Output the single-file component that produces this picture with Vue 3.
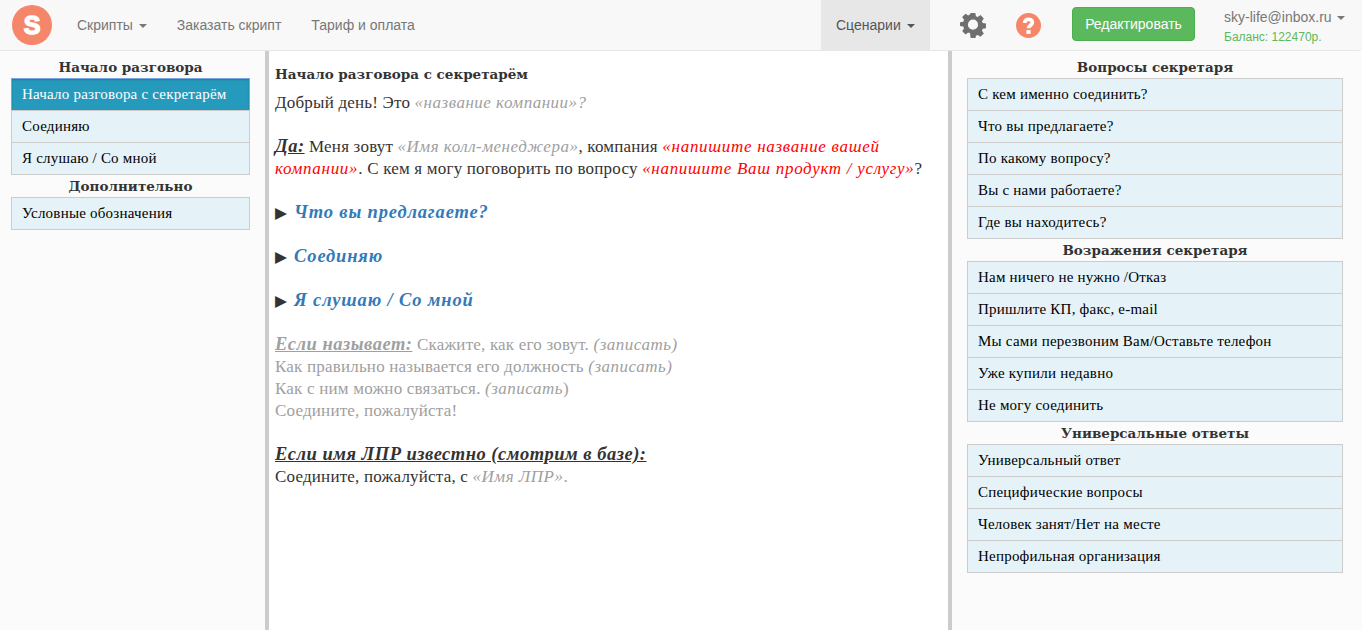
<script setup>
const left = [
  { title: 'Начало разговора', items: ['Начало разговора с секретарём', 'Соединяю', 'Я слушаю / Со мной'], active: 0 },
  { title: 'Дополнительно', items: ['Условные обозначения'], active: -1 }
]
const right = [
  { title: 'Вопросы секретаря', items: ['С кем именно соединить?', 'Что вы предлагаете?', 'По какому вопросу?', 'Вы с нами работаете?', 'Где вы находитесь?'] },
  { title: 'Возражения секретаря', items: ['Нам ничего не нужно /Отказ', 'Пришлите КП, факс, e-mail', 'Мы сами перезвоним Вам/Оставьте телефон', 'Уже купили недавно', 'Не могу соединить'] },
  { title: 'Универсальные ответы', items: ['Универсальный ответ', 'Специфические вопросы', 'Человек занят/Нет на месте', 'Непрофильная организация'] }
]
</script>

<template>
  <div class="page">
    <header class="nav">
      <div class="logo">S</div>
      <a class="link first">Скрипты <i class="caret"></i></a>
      <a class="link">Заказать скрипт</a>
      <a class="link">Тариф и оплата</a>
      <div class="spacer"></div>
      <a class="link scen">Сценарии <i class="caret"></i></a>
      <svg class="gear" viewBox="0 0 24 24" width="26" height="26">
        <path fill="#6f6f6f" fill-rule="evenodd" d="M9.6 0h4.8l.6 3.3 1.9.8 2.8-1.9 3.4 3.4-1.9 2.8.8 1.9 3.3.6v4.8l-3.3.6-.8 1.9 1.9 2.8-3.4 3.4-2.8-1.9-1.9.8-.6 3.3H9.6L9 20.9l-1.9-.8-2.8 1.9-3.4-3.4 1.9-2.8-.8-1.9-3.3-.6V9.5l3.3-.6.8-1.9-1.9-2.8 3.4-3.4 2.8 1.9L9 1.3zM12 6.8a5.2 5.2 0 1 0 0 10.4 5.2 5.2 0 0 0 0-10.4z" transform="translate(1.2 .9) scale(.9)"/>
      </svg>
      <svg class="help" viewBox="0 0 24 24" width="25" height="25">
        <circle cx="12" cy="12" r="12" fill="#f5866a"/>
        <path fill="none" stroke="#fff" stroke-width="3.6" d="M8.4 9.6c0-2.4 1.6-3.6 3.6-3.6s3.7 1.1 3.7 3c0 2.8-3.6 2.6-3.6 5.6"/>
        <rect x="10" y="16.4" width="4" height="3.6" fill="#fff"/>
      </svg>
      <button class="edit">Редактировать</button>
      <div class="user">
        <div class="mail">sky-life@inbox.ru <i class="caret"></i></div>
        <div class="bal">Баланс: 122470р.</div>
      </div>
    </header>

    <div class="cols">
      <aside class="side lside">
        <section v-for="g in left" :key="g.title">
          <h4>{{ g.title }}</h4>
          <ul>
            <li v-for="(it, i) in g.items" :key="it" :class="{ active: i === g.active }">{{ it }}</li>
          </ul>
        </section>
      </aside>

      <main class="main">
        <h4 class="head">Начало разговора с секретарём</h4>
        <p>Добрый день! Это <em class="gr">«название компании»?</em></p>
        <p class="sp"><b class="lab">Да:</b> Меня зовут <em class="gr">«Имя колл-менеджера»</em>, компания <em class="red">«напишите название вашей компании»</em>. С кем я могу поговорить по вопросу <em class="red">«напишите Ваш продукт / услугу»</em>?</p>
        <p class="jump sp"><span class="tri">▶</span><a>Что вы предлагаете?</a></p>
        <p class="jump sp"><span class="tri">▶</span><a>Соединяю</a></p>
        <p class="jump sp"><span class="tri">▶</span><a>Я слушаю / Со мной</a></p>
        <div class="muted sp">
          <p><b class="lab">Если называет:</b> Скажите, как его зовут. <em>(записать)</em></p>
          <p>Как правильно называется его должность <em>(записать)</em></p>
          <p>Как с ним можно связаться. <em>(записать</em>)</p>
          <p>Соедините, пожалуйста!</p>
        </div>
        <p class="sp"><b class="lab">Если имя ЛПР известно (смотрим в базе):</b></p>
        <p>Соедините, пожалуйста, с <em class="gr">«Имя ЛПР»</em><span class="gr">.</span></p>
      </main>

      <aside class="side rside">
        <section v-for="g in right" :key="g.title">
          <h4>{{ g.title }}</h4>
          <ul>
            <li v-for="it in g.items" :key="it">{{ it }}</li>
          </ul>
        </section>
      </aside>
    </div>
  </div>
</template>

<style>
html, body { margin: 0; padding: 0; overflow: hidden; }
</style>

<style scoped>
.page { height: 630px; display: flex; flex-direction: column; font-family: "Liberation Serif", serif; color: #333; background: #fff; }
.nav { height: 50px; flex: none; box-sizing: content-box; display: flex; align-items: center; background: #f8f8f8; border-bottom: 1px solid #e7e7e7; border-bottom-right-radius: 4px; font-family: "Liberation Sans", sans-serif; font-size: 14px; color: #777; }
.logo { width: 40px; height: 40px; margin-left: 12px; border-radius: 50%; background: #f5866a; color: #fff; font: 700 25px/41px "Liberation Sans", sans-serif; -webkit-text-stroke: 1.5px #fff; text-align: center; flex: none; }
.link { height: 50px; line-height: 50px; padding: 0 15px; color: #777; }
.first { margin-left: 10px; }
.caret { display: inline-block; margin-left: 2px; vertical-align: middle; border-top: 4px solid; border-left: 4px solid transparent; border-right: 4px solid transparent; }
.spacer { flex: 1; }
.scen { background: #e7e7e7; color: #555; width: 79px; }
.gear { margin-left: 30px; }
.help { margin-left: 30px; }
.edit { margin-left: 31px; margin-bottom: 2px; width: 123px; height: 34px; border: 1px solid #4cae4c; border-radius: 4px; background: #5cb85c; color: #fff; font: 14px "Liberation Sans", sans-serif; padding: 0; }
.user { width: 138px; margin-left: 29px; padding-top: 3px; flex: none; }
.mail { line-height: 18px; }
.bal { font-size: 12px; line-height: 16px; margin-top: 3px; color: #5cb85c; }
.cols { flex: 1; display: flex; min-height: 0; }
.side { background: #fbfbfb; box-sizing: border-box; padding-top: 7px; }
.lside { width: 265px; padding-left: 11px; padding-right: 15px; flex: none; }
.rside { width: 414px; padding-left: 15px; padding-right: 19px; flex: none; border-left: 4px solid #ccc; }
section + section { margin-top: 2px; }
h4 { margin: 0; font-family: "DejaVu Serif", serif; font-size: 13.5px; line-height: 18px; font-weight: 700; text-align: center; color: #333; }
ul { list-style: none; margin: 2px 0 0; padding: 0; }
li { box-sizing: border-box; height: 33px; margin-top: -1px; border: 1px solid #ccc; background: #e5f3f9; color: #000; padding: 0 10px; font-size: 15px; letter-spacing: .22px; line-height: 31px; }
ul li:first-child { margin-top: 0; }
li.active { background: #269abc; color: #fff; border-color: #7ba7e0; box-shadow: inset 0 1px 2px rgba(0,0,0,.2); }
.main { flex: 1; border-left: 4px solid #ccc; padding: 13px 6px 0; font-size: 17px; letter-spacing: .2px; line-height: 22px; color: #333; min-width: 0; }
.head { text-align: left; line-height: 20px; margin-bottom: 8px; letter-spacing: 0; }
p { margin: 0; }
.sp { margin-top: 22px; }
em { letter-spacing: .5px; }
.gr { color: #a0a0a0; }
.red { color: #f00; letter-spacing: .7px; }
.lab { font-size: 18.5px; line-height: 0; letter-spacing: .5px; font-style: italic; text-decoration: underline; font-weight: 700; }
.jump { height: 22px; }
.jump a { font-size: 18.5px; line-height: 0; letter-spacing: .85px; color: #337ab7; font-style: italic; font-weight: 700; }
.tri { font-family: "DejaVu Sans", sans-serif; font-size: 15.5px; line-height: 0; display: inline-block; width: 19px; letter-spacing: 0; }
.muted { color: #a0a0a0; }
</style>
